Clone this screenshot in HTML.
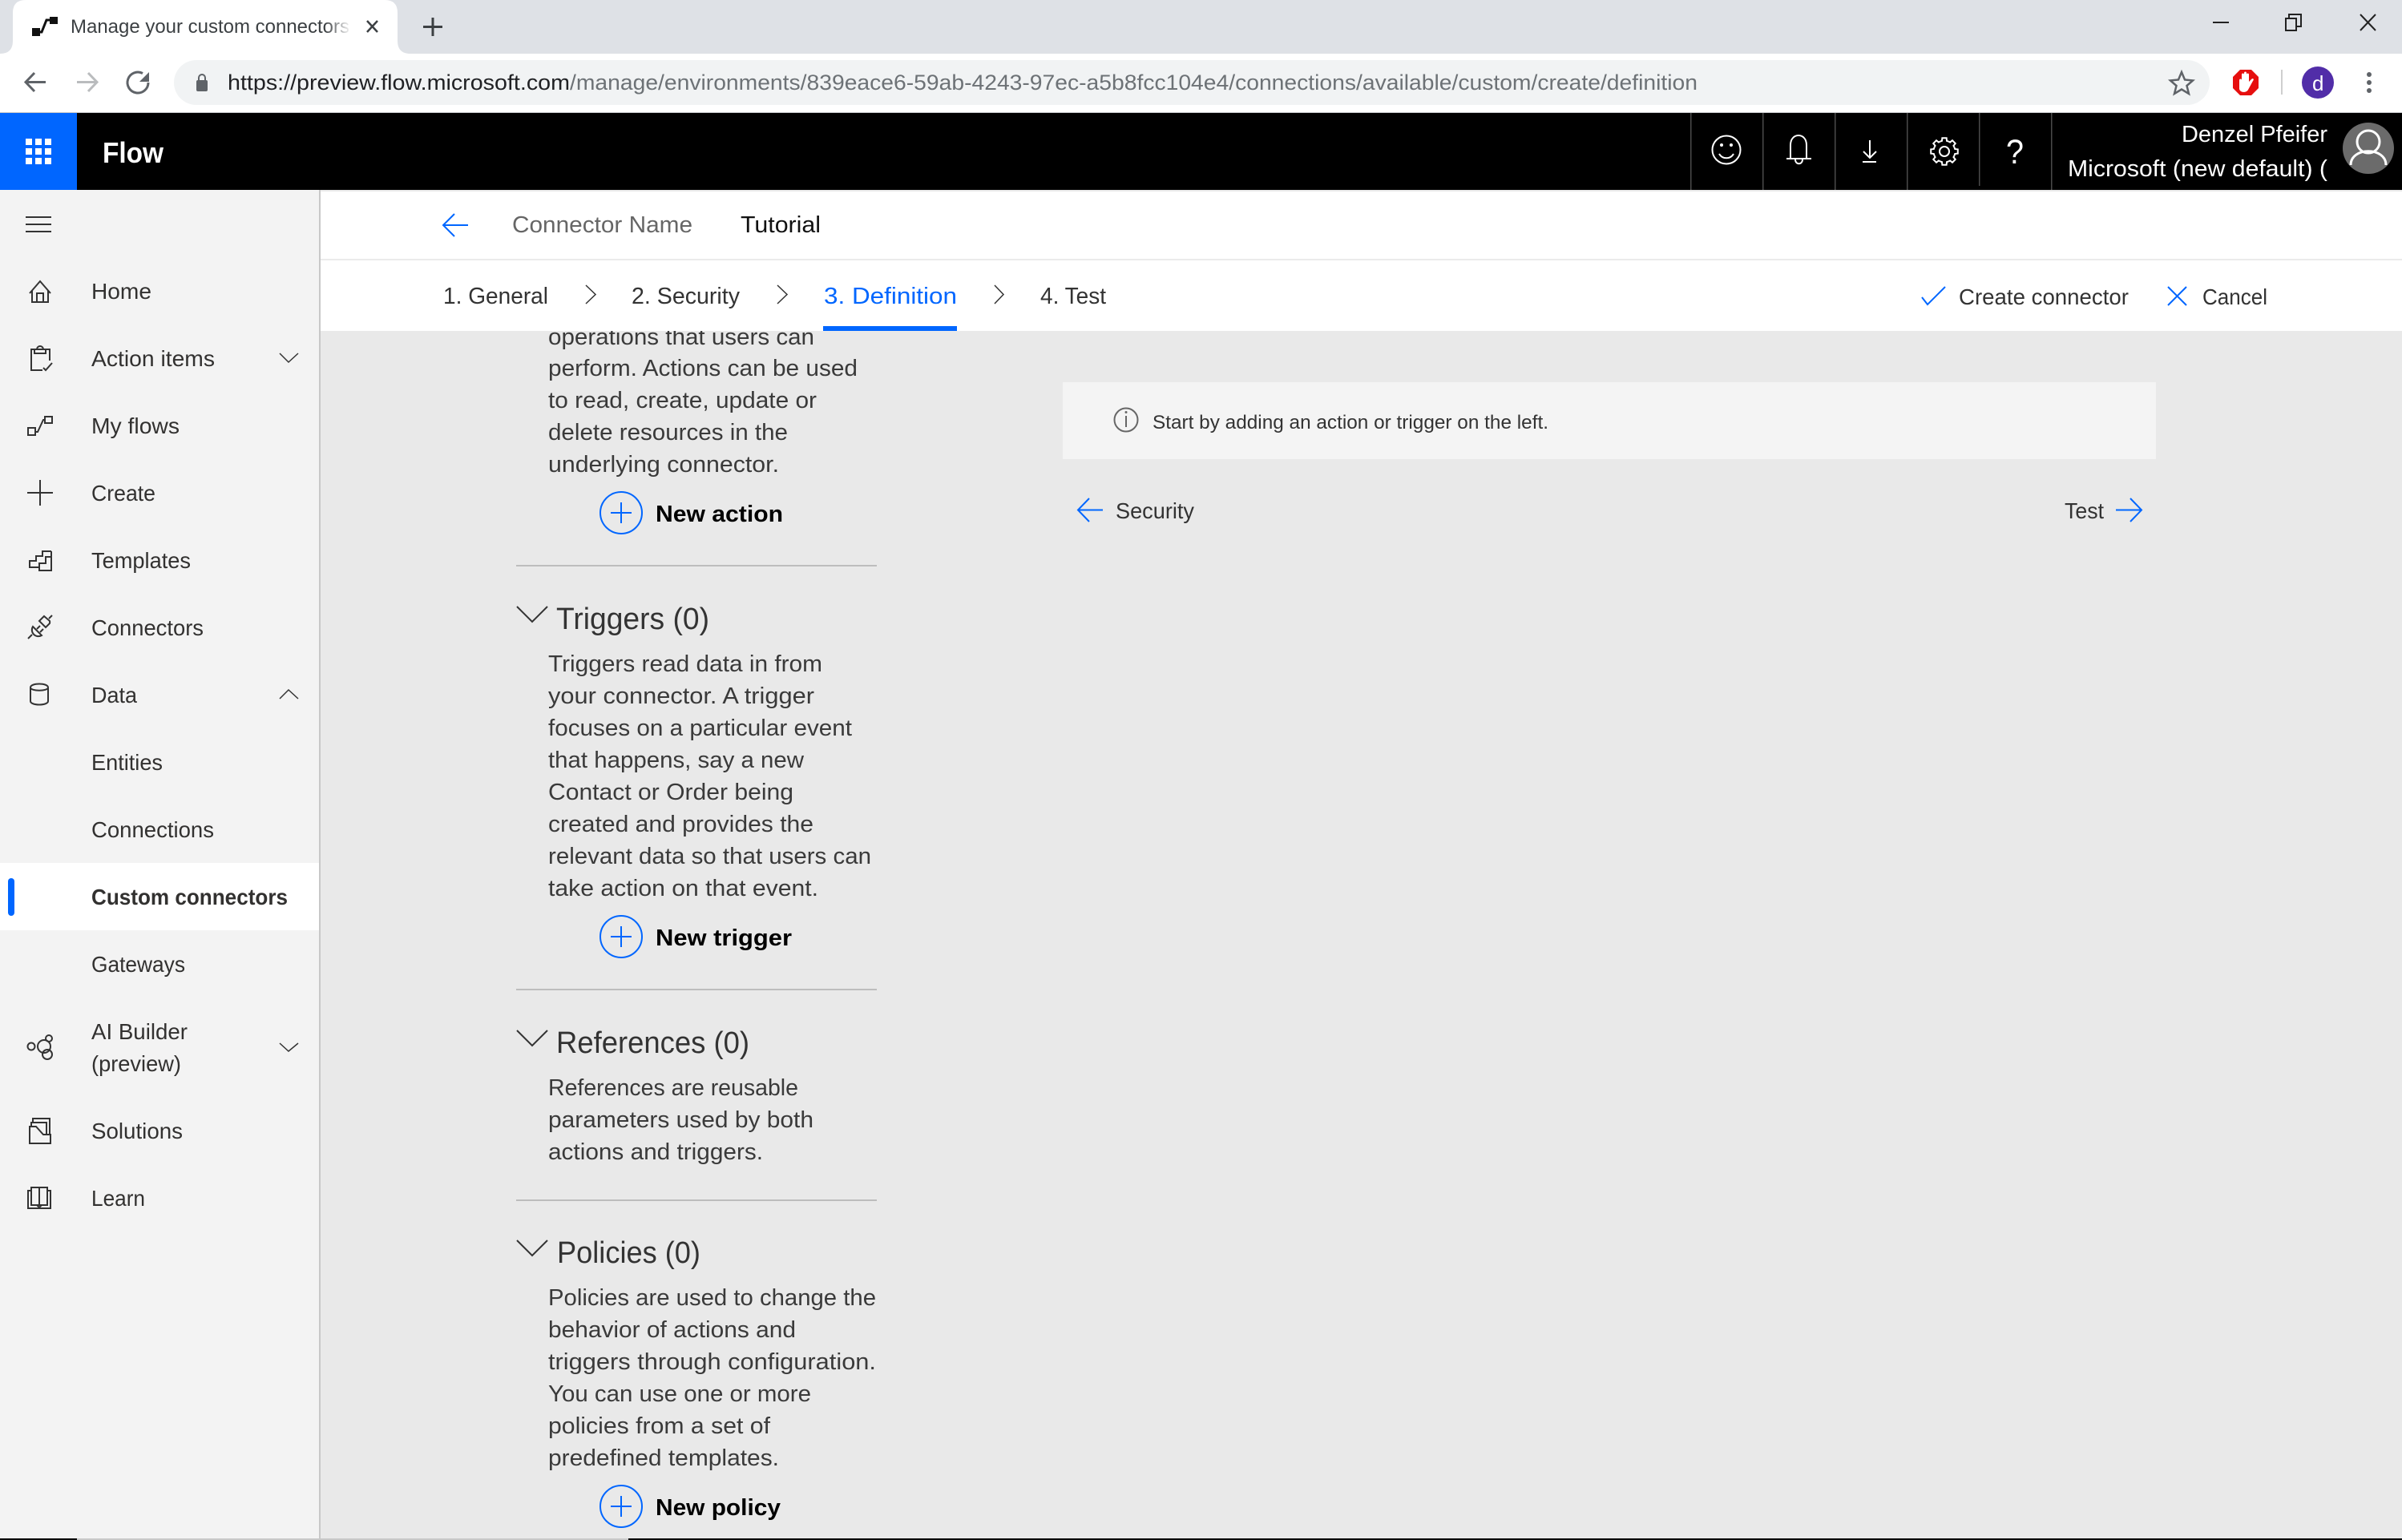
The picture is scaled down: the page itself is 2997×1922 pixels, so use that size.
<!DOCTYPE html>
<html><head><meta charset="utf-8"><title>Manage your custom connectors</title>
<style>
html,body{margin:0;padding:0;background:#e9e9e9;width:2997px;height:1922px;overflow:hidden}
svg{position:absolute;left:0;top:0;display:block}
text{font-family:"Liberation Sans",Arial,sans-serif}
.n{font-size:28px;fill:#323130}
.b{font-size:28.5px;fill:#3a3a3a}
.h{font-size:38px;fill:#333}
.nb{font-size:29px;font-weight:700;fill:#000}
.t{font-size:29px;fill:#333}
.i{fill:none;stroke:#333;stroke-width:2}
.c{fill:none;stroke:#333;stroke-width:1.5}
.w{fill:none;stroke:#fff;stroke-width:2}
.bl{fill:none;stroke:#0066ff;stroke-width:2}
</style></head><body>
<svg xmlns="http://www.w3.org/2000/svg" width="2997" height="1922" viewBox="0 0 2997 1922">
<defs><linearGradient id="fade" x1="0" x2="1" y1="0" y2="0"><stop offset="0" stop-color="#fff" stop-opacity="0"/><stop offset="1" stop-color="#fff"/></linearGradient></defs>

<!-- main content background -->
<rect x="0" y="0" width="2997" height="1922" fill="#e9e9e9"/>

<!-- left definition column -->
<g>
<text class="b" x="684" y="430" textLength="332" lengthAdjust="spacingAndGlyphs">operations that users can</text>
<text class="b" x="684" y="469" textLength="386" lengthAdjust="spacingAndGlyphs">perform. Actions can be used</text>
<text class="b" x="684" y="509" textLength="335" lengthAdjust="spacingAndGlyphs">to read, create, update or</text>
<text class="b" x="684" y="549" textLength="299" lengthAdjust="spacingAndGlyphs">delete resources in the</text>
<text class="b" x="684" y="589" textLength="288" lengthAdjust="spacingAndGlyphs">underlying connector.</text>
<circle class="bl" cx="775" cy="640" r="26"/><path class="bl" d="M762 640H788M775 627V653"/>
<text class="nb" x="818" y="651" textLength="159" lengthAdjust="spacingAndGlyphs">New action</text>
<rect x="644" y="705" width="450" height="2" fill="#bdbdbd"/>

<path d="M645 757L664 776L683 757" fill="none" stroke="#333" stroke-width="2"/>
<text class="h" x="694" y="785" textLength="191" lengthAdjust="spacingAndGlyphs">Triggers (0)</text>
<text class="b" x="684" y="838" textLength="342" lengthAdjust="spacingAndGlyphs">Triggers read data in from</text>
<text class="b" x="684" y="878" textLength="332" lengthAdjust="spacingAndGlyphs">your connector. A trigger</text>
<text class="b" x="684" y="918" textLength="379" lengthAdjust="spacingAndGlyphs">focuses on a particular event</text>
<text class="b" x="684" y="958" textLength="319" lengthAdjust="spacingAndGlyphs">that happens, say a new</text>
<text class="b" x="684" y="998" textLength="306" lengthAdjust="spacingAndGlyphs">Contact or Order being</text>
<text class="b" x="684" y="1038" textLength="331" lengthAdjust="spacingAndGlyphs">created and provides the</text>
<text class="b" x="684" y="1078" textLength="403" lengthAdjust="spacingAndGlyphs">relevant data so that users can</text>
<text class="b" x="684" y="1118" textLength="337" lengthAdjust="spacingAndGlyphs">take action on that event.</text>
<circle class="bl" cx="775" cy="1169" r="26"/><path class="bl" d="M762 1169H788M775 1156V1182"/>
<text class="nb" x="818" y="1180" textLength="170" lengthAdjust="spacingAndGlyphs">New trigger</text>
<rect x="644" y="1234" width="450" height="2" fill="#bdbdbd"/>

<path d="M645 1286L664 1305L683 1286" fill="none" stroke="#333" stroke-width="2"/>
<text class="h" x="694" y="1314" textLength="241" lengthAdjust="spacingAndGlyphs">References (0)</text>
<text class="b" x="684" y="1367" textLength="312" lengthAdjust="spacingAndGlyphs">References are reusable</text>
<text class="b" x="684" y="1407" textLength="331" lengthAdjust="spacingAndGlyphs">parameters used by both</text>
<text class="b" x="684" y="1447" textLength="268" lengthAdjust="spacingAndGlyphs">actions and triggers.</text>
<rect x="644" y="1497" width="450" height="2" fill="#bdbdbd"/>

<path d="M645 1548L664 1567L683 1548" fill="none" stroke="#333" stroke-width="2"/>
<text class="h" x="695" y="1576" textLength="179" lengthAdjust="spacingAndGlyphs">Policies (0)</text>
<text class="b" x="684" y="1629" textLength="409" lengthAdjust="spacingAndGlyphs">Policies are used to change the</text>
<text class="b" x="684" y="1669" textLength="309" lengthAdjust="spacingAndGlyphs">behavior of actions and</text>
<text class="b" x="684" y="1709" textLength="409" lengthAdjust="spacingAndGlyphs">triggers through configuration.</text>
<text class="b" x="684" y="1749" textLength="328" lengthAdjust="spacingAndGlyphs">You can use one or more</text>
<text class="b" x="684" y="1789" textLength="277" lengthAdjust="spacingAndGlyphs">policies from a set of</text>
<text class="b" x="684" y="1829" textLength="288" lengthAdjust="spacingAndGlyphs">predefined templates.</text>
<circle class="bl" cx="775" cy="1880" r="26"/><path class="bl" d="M762 1880H788M775 1867V1893"/>
<text class="nb" x="818" y="1891" textLength="156" lengthAdjust="spacingAndGlyphs">New policy</text>
</g>

<!-- right panel -->
<rect x="1326" y="477" width="1364" height="96" fill="#f4f4f4"/>
<circle cx="1405" cy="524" r="14.500" fill="none" stroke="#666" stroke-width="2"/>
<path d="M1405 519V533" stroke="#666" stroke-width="2"/><circle cx="1405" cy="514.500" r="1.500" fill="#666"/>
<text x="1438" y="535" font-size="24.500" fill="#333" textLength="494" lengthAdjust="spacingAndGlyphs">Start by adding an action or trigger on the left.</text>
<path class="bl" d="M1359 622L1345 636.500L1359 651M1345 636.500H1376"/>
<text class="t" x="1392" y="647" style="font-size:28px" textLength="98" lengthAdjust="spacingAndGlyphs">Security</text>
<text class="t" x="2576" y="647" style="font-size:28px" textLength="49" lengthAdjust="spacingAndGlyphs">Test</text>
<path class="bl" d="M2658 622L2672 636.500L2658 651M2640 636.500H2672"/>

<!-- bottom line -->
<rect x="0" y="1920" width="2997" height="2" fill="#000"/>
<rect x="96" y="1920" width="688" height="2" fill="#c8c8c8"/>

<!-- page header rows -->
<rect x="400" y="237" width="2597" height="176" fill="#fff"/>
<rect x="400" y="237" width="2597" height="2" fill="#e8e8e8"/>
<rect x="400" y="323" width="2597" height="2" fill="#ebebeb"/>
<path class="bl" d="M567 267L553 281L567 295M553 281H584"/>
<text x="639" y="290" font-size="29" fill="#666" textLength="225" lengthAdjust="spacingAndGlyphs">Connector Name</text>
<text x="924" y="290" font-size="29" fill="#111" textLength="100" lengthAdjust="spacingAndGlyphs">Tutorial</text>

<text class="t" x="553" y="379" textLength="131" lengthAdjust="spacingAndGlyphs">1. General</text>
<path class="c" d="M731 356L743 367.500L731 379"/>
<text class="t" x="788" y="379" textLength="135" lengthAdjust="spacingAndGlyphs">2. Security</text>
<path class="c" d="M970 356L982 367.500L970 379"/>
<text x="1028" y="379" font-size="29" fill="#0066ff" textLength="166" lengthAdjust="spacingAndGlyphs">3. Definition</text>
<rect x="1027" y="407" width="167" height="6" fill="#0066ff"/>
<path class="c" d="M1241 356L1252 367.500L1241 379"/>
<text class="t" x="1298" y="379" textLength="82" lengthAdjust="spacingAndGlyphs">4. Test</text>

<path class="bl" d="M2398 371L2405 380L2427 358"/>
<text class="t" x="2444" y="380" style="font-size:28px" textLength="212" lengthAdjust="spacingAndGlyphs">Create connector</text>
<path class="bl" d="M2705 358L2728 381M2728 358L2705 381"/>
<text class="t" x="2748" y="380" style="font-size:28px" textLength="81" lengthAdjust="spacingAndGlyphs">Cancel</text>

<!-- sidebar -->
<rect x="0" y="237" width="398" height="1683" fill="#f3f3f3"/>
<rect x="398" y="237" width="2" height="1683" fill="#c8c8c8"/>
<rect x="0" y="1077" width="398" height="84" fill="#fff"/>
<rect x="10" y="1096" width="8" height="47" rx="4" fill="#0066ff"/>

<path d="M32 271H64M32 280H64M32 289H64" stroke="#333" stroke-width="2"/>

<path class="i" d="M37 366L50 351L63 366M40 362V377H60V362M46 377V366H54V377"/>
<text class="n" x="114" y="373" textLength="75" lengthAdjust="spacingAndGlyphs">Home</text>

<path class="i" d="M53 462H39V436H62V450M43 436V441H57V436H54A4 4 0 0 0 46 436ZM54 459L57 462L65 453"/>
<text class="n" x="114" y="457" textLength="154" lengthAdjust="spacingAndGlyphs">Action items</text>
<path class="c" d="M349 441L360 452L372 441"/>

<path class="i" d="M35 534H44V543H35ZM56 520H65V528H56ZM44 539H47L54 524H56"/>
<text class="n" x="114" y="541" textLength="110" lengthAdjust="spacingAndGlyphs">My flows</text>

<path class="i" d="M34 615H66M50 599V631"/>
<text class="n" x="114" y="625" textLength="80" lengthAdjust="spacingAndGlyphs">Create</text>

<path class="i" d="M49 708H37V700H45V694H53V688H64M64 688V712H49V703H57V695H64"/>
<text class="n" x="114" y="709" textLength="124" lengthAdjust="spacingAndGlyphs">Templates</text>

<path class="i" d="M41 782L52 793A8 8 0 0 1 41 782ZM35 797L40 792M46 785L50 781M50 789L54 785M49 775L55 769L62 775A6 6 0 0 1 62 778L57 783ZM61 772L65 768"/>
<text class="n" x="114" y="793" textLength="140" lengthAdjust="spacingAndGlyphs">Connectors</text>

<path class="i" d="M38 858C38 852 60 852 60 858V875C60 881 38 881 38 875ZM38 858C38 863 60 863 60 858"/>
<text class="n" x="114" y="877" textLength="57" lengthAdjust="spacingAndGlyphs">Data</text>
<path class="c" d="M349 872L360 861L372 872"/>

<text class="n" x="114" y="961" textLength="89" lengthAdjust="spacingAndGlyphs">Entities</text>
<text class="n" x="114" y="1045" textLength="153" lengthAdjust="spacingAndGlyphs">Connections</text>
<text class="n" x="114" y="1129" style="font-weight:700" textLength="245" lengthAdjust="spacingAndGlyphs">Custom connectors</text>
<text class="n" x="114" y="1213" textLength="117" lengthAdjust="spacingAndGlyphs">Gateways</text>

<g class="i"><circle cx="39" cy="1306" r="4.500"/><circle cx="55" cy="1306" r="8"/><circle cx="61" cy="1296" r="4"/><circle cx="59" cy="1316" r="6"/></g>
<text class="n" x="114" y="1297" textLength="120" lengthAdjust="spacingAndGlyphs">AI Builder</text>
<text class="n" x="114" y="1337" textLength="112" lengthAdjust="spacingAndGlyphs">(preview)</text>
<path class="c" d="M349 1302L360 1312L372 1302"/>

<path class="i" d="M37 1427H63V1416H54L45 1406H37ZM39 1405V1401H58V1416M41 1401V1396H62V1416"/>
<text class="n" x="114" y="1421" textLength="114" lengthAdjust="spacingAndGlyphs">Solutions</text>

<path class="i" d="M39 1486H35V1508H63V1486H59M39 1482H49V1504H39ZM49 1482H59V1504H49ZM46 1504L49 1507L52 1504"/>
<text class="n" x="114" y="1505" textLength="67" lengthAdjust="spacingAndGlyphs">Learn</text>

<!-- black app header -->
<rect x="0" y="141" width="2997" height="96" fill="#000"/>
<rect x="0" y="141" width="96" height="96" fill="#0066ff"/>
<g fill="#fff">
<rect x="32" y="173" width="8" height="8"/><rect x="44" y="173" width="8" height="8"/><rect x="56" y="173" width="8" height="8"/>
<rect x="32" y="185" width="8" height="8"/><rect x="44" y="185" width="8" height="8"/><rect x="56" y="185" width="8" height="8"/>
<rect x="32" y="197" width="8" height="8"/><rect x="44" y="197" width="8" height="8"/><rect x="56" y="197" width="8" height="8"/>
</g>
<text x="128" y="203" font-size="36" font-weight="700" fill="#fff" textLength="76" lengthAdjust="spacingAndGlyphs">Flow</text>
<g fill="#4a4a4a">
<rect x="2109" y="141" width="1.500" height="96"/><rect x="2199" y="141" width="1.500" height="96"/><rect x="2289" y="141" width="1.500" height="96"/><rect x="2379" y="141" width="1.500" height="96"/><rect x="2469" y="141" width="1.500" height="91"/><rect x="2559" y="141" width="1.500" height="96"/>
</g>
<circle class="w" cx="2154" cy="187" r="17.500"/><circle cx="2148" cy="181" r="2" fill="#fff"/><circle cx="2160" cy="181" r="2" fill="#fff"/><path class="w" d="M2145 192C2149 199 2159 199 2163 192"/>
<path class="w" d="M2234 198V181C2234 165 2254 165 2254 181V198ZM2229 198H2260M2240 199C2240 206 2249 206 2249 199"/>
<path class="w" d="M2333 175V197M2325 189L2333 197L2341 189"/><rect x="2324" y="201" width="17" height="2" fill="#fff"/>
<g transform="translate(2426 189)"><circle class="w" r="6"/>
<g class="w"><polyline points="-5.170,-12.470 -3.040,-13.150 -2.660,-16.790 2.660,-16.790 3.040,-13.150 5.170,-12.470"/>
<polyline transform="rotate(45)" points="-5.170,-12.470 -3.040,-13.150 -2.660,-16.790 2.660,-16.790 3.040,-13.150 5.170,-12.470"/>
<polyline transform="rotate(90)" points="-5.170,-12.470 -3.040,-13.150 -2.660,-16.790 2.660,-16.790 3.040,-13.150 5.170,-12.470"/>
<polyline transform="rotate(135)" points="-5.170,-12.470 -3.040,-13.150 -2.660,-16.790 2.660,-16.790 3.040,-13.150 5.170,-12.470"/>
<polyline transform="rotate(180)" points="-5.170,-12.470 -3.040,-13.150 -2.660,-16.790 2.660,-16.790 3.040,-13.150 5.170,-12.470"/>
<polyline transform="rotate(225)" points="-5.170,-12.470 -3.040,-13.150 -2.660,-16.790 2.660,-16.790 3.040,-13.150 5.170,-12.470"/>
<polyline transform="rotate(270)" points="-5.170,-12.470 -3.040,-13.150 -2.660,-16.790 2.660,-16.790 3.040,-13.150 5.170,-12.470"/>
<polyline transform="rotate(315)" points="-5.170,-12.470 -3.040,-13.150 -2.660,-16.790 2.660,-16.790 3.040,-13.150 5.170,-12.470"/>
</g></g>
<text x="2503" y="204" font-size="43" fill="#fff" textLength="22" lengthAdjust="spacingAndGlyphs">?</text>
<text x="2722" y="177" font-size="29" fill="#fff" textLength="182" lengthAdjust="spacingAndGlyphs">Denzel Pfeifer</text>
<text x="2580" y="220" font-size="29" fill="#fff" textLength="324" lengthAdjust="spacingAndGlyphs">Microsoft (new default) (</text>
<circle cx="2955" cy="185" r="32" fill="#6b6b6b"/>
<circle class="w" cx="2955" cy="177" r="14" style="stroke-width:3"/>
<path class="w" style="stroke-width:3" d="M2933 206C2933 183 2977 183 2977 206"/>

<!-- browser chrome -->
<rect x="0" y="0" width="2997" height="67" fill="#dee1e6"/>
<rect x="0" y="67" width="2997" height="73" fill="#fff"/>
<rect x="0" y="140" width="2997" height="1" fill="#c4c6c9"/>
<path d="M0 67Q16 67 16 51V16Q16 0 32 0H480Q496 0 496 16V51Q496 67 512 67Z" fill="#fff"/>
<path d="M40 35H50V45H40ZM62 21H72V30H62Z" fill="#111"/><path d="M48 40H52L58 25H64" fill="none" stroke="#111" stroke-width="3"/>
<text x="88" y="41" font-size="24.500" fill="#3c4043" textLength="348" lengthAdjust="spacingAndGlyphs">Manage your custom connectors</text>
<rect x="406" y="16" width="32" height="36" fill="url(#fade)"/>
<path d="M458 26L471 40M471 26L458 40" stroke="#3c4043" stroke-width="2.500"/>
<path d="M528 33.500H552M540 22V45" stroke="#3c4043" stroke-width="3"/>

<path d="M57 102.500H33M43 91L32 102.500L43 114" fill="none" stroke="#5f6368" stroke-width="3"/>
<path d="M96 102.500H120M110 91L121 102.500L110 114" fill="none" stroke="#babcbe" stroke-width="3"/>
<path d="M185 103A13 13 0 1 1 178 91.500" fill="none" stroke="#5f6368" stroke-width="3"/><path d="M186 90V102H174Z" fill="#5f6368"/>
<rect x="217" y="75" width="2540" height="56" rx="28" fill="#f1f3f4"/>
<rect x="245" y="100" width="14" height="14" rx="2" fill="#5f6368"/><path d="M248 100V97A4 4 0 0 1 256 97V100" fill="none" stroke="#5f6368" stroke-width="2"/>
<text x="284" y="112" font-size="27" fill="#202124" textLength="427" lengthAdjust="spacingAndGlyphs">https://preview.flow.microsoft.com</text>
<text x="711" y="112" font-size="27" fill="#6d7276" textLength="1407" lengthAdjust="spacingAndGlyphs">/manage/environments/839eace6-59ab-4243-97ec-a5b8fcc104e4/connections/available/custom/create/definition</text>
<path d="M2722 90L2726 99.500L2736 100.500L2728.500 107L2731 117L2722 111.500L2713 117L2715.500 107L2708 100.500L2718 99.500Z" fill="none" stroke="#5f6368" stroke-width="2.500"/>
<path d="M2795 87H2809L2818 96V110L2809 119H2795L2786 110V96Z" fill="#e60f0f"/>
<path d="M2794 111V100C2794 98 2797 98 2797 100V93C2797 91 2800 91 2800 93V91C2800 89 2803 89 2803 91V93C2803 91 2806 91 2806 93V102L2809 99C2811 97 2813 99 2811 101L2805 112C2803 116 2795 116 2794 111Z" fill="#fff"/>
<rect x="2846" y="87" width="2" height="31" fill="#cfcfcf"/>
<circle cx="2892" cy="103" r="20" fill="#512da8"/>
<text x="2885" y="113" font-size="26" fill="#fff">d</text>
<circle cx="2956" cy="93" r="3" fill="#5f6368"/><circle cx="2956" cy="103" r="3" fill="#5f6368"/><circle cx="2956" cy="113" r="3" fill="#5f6368"/>
<rect x="2761" y="27" width="20" height="2" fill="#222"/>
<path d="M2852 23H2865V38H2852ZM2856 23V18H2871V33H2865" fill="none" stroke="#222" stroke-width="2"/>
<path d="M2945 18L2964 38M2964 18L2945 38" stroke="#222" stroke-width="2"/>
</svg>
</body></html>
